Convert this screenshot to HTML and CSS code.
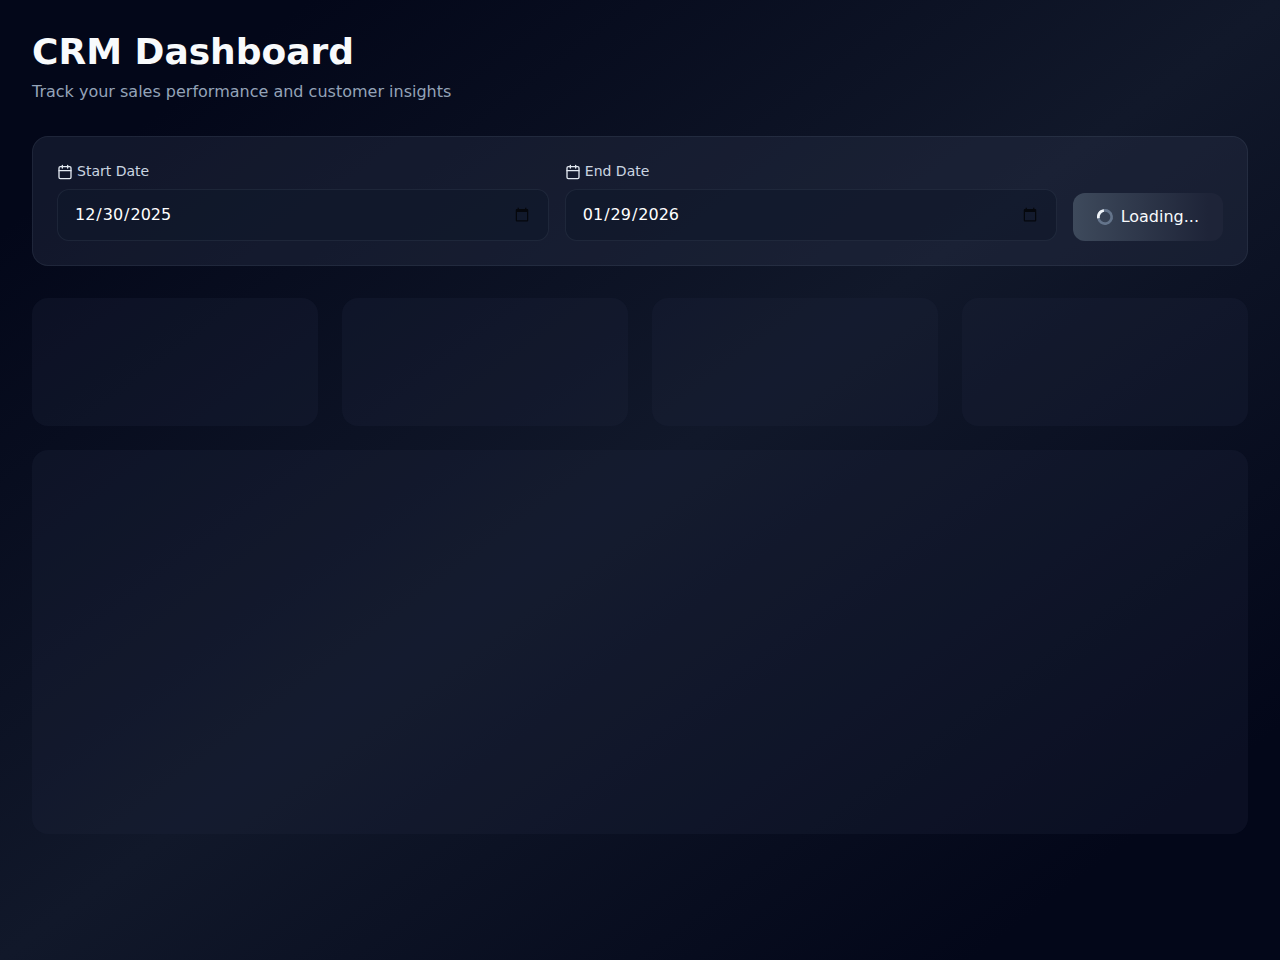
FILE: index.html
```html
<!DOCTYPE html>
<html lang="en-US">

<head>
    <meta charset="UTF-8">
    <meta name="viewport" content="width=device-width, initial-scale=1.0">
    <title>CRM Dashboard</title>
    <link rel="stylesheet" href="styles.css">
</head>

<body>
    <main class="dashboard">
        <header class="page-header">
            <h1>CRM Dashboard</h1>
            <p>Track your sales performance and customer insights</p>
        </header>

        <form class="filters">
            <div class="field">
                <label for="start-date">
                    <svg class="icon" viewBox="0 0 24 24" aria-hidden="true">
                        <path d="M8 2v4M16 2v4" />
                        <rect x="3" y="4" width="18" height="18" rx="2" />
                        <path d="M3 10h18" />
                    </svg>Start Date
                </label>
                <input type="date" id="start-date" value="2025-12-30">
            </div>
            <div class="field">
                <label for="end-date">
                    <svg class="icon" viewBox="0 0 24 24" aria-hidden="true">
                        <path d="M8 2v4M16 2v4" />
                        <rect x="3" y="4" width="18" height="18" rx="2" />
                        <path d="M3 10h18" />
                    </svg>End Date
                </label>
                <input type="date" id="end-date" value="2026-01-29">
            </div>
            <button type="submit" class="load-btn" disabled>
                <svg class="spinner" viewBox="0 0 24 24" aria-hidden="true">
                    <circle class="track" cx="12" cy="12" r="10" />
                    <path class="arc" d="M4 12a8 8 0 018-8V0C5.373 0 0 5.373 0 12h4z" />
                </svg>
                Loading...
            </button>
        </form>

        <!-- placeholders while the data loads -->
        <section class="stats" aria-busy="true">
            <div class="skeleton"></div>
            <div class="skeleton"></div>
            <div class="skeleton"></div>
            <div class="skeleton"></div>
        </section>
        <section class="skeleton chart" aria-busy="true"></section>
    </main>
</body>

</html>
```

FILE: styles.css
```css
* {
    box-sizing: border-box;
}

body {
    margin: 0;
    min-height: 100vh;
    font-family: "DejaVu Sans", sans-serif;
    font-size: 16px;
    line-height: 24px;
    color: #fff;
    background: linear-gradient(to bottom right, #030719, #030719 12%, #11182a 50%, #030719 88%, #030719);
}

.dashboard {
    padding: 32px;
}

.page-header {
    margin-bottom: 32px;
}

.page-header h1 {
    margin: 0 0 8px;
    font-size: 36px;
    line-height: 40px;
    color: #f8fafc;
}

.page-header p {
    margin: 0;
    color: #94a3b8;
}

.filters {
    display: flex;
    align-items: flex-end;
    gap: 16px;
    margin-bottom: 32px;
    padding: 24px;
    background: rgba(41, 48, 70, 0.4);
    border: 1px solid rgba(148, 163, 184, 0.1);
    border-radius: 16px;
}

.field {
    flex: 1;
}

.field label {
    display: block;
    margin-bottom: 8px;
    font-size: 14px;
    line-height: 20px;
    color: #cbd5e1;
}

.icon {
    width: 16px;
    height: 16px;
    margin-right: 4px;
    vertical-align: middle;
    fill: none;
    stroke: #e2e8f0;
    stroke-width: 2;
    stroke-linecap: round;
    stroke-linejoin: round;
}

.field input {
    display: block;
    width: 100%;
    height: 52px;
    padding: 12px 16px;
    font: inherit;
    color: #fff;
    background: rgba(15, 23, 42, 0.6);
    border: 1px solid rgba(148, 163, 184, 0.1);
    border-radius: 12px;
}

.field input::-webkit-calendar-picker-indicator {
    opacity: 0.7;
}

.load-btn {
    display: flex;
    align-items: center;
    gap: 8px;
    padding: 12px 24px;
    font: inherit;
    color: #f8fafc;
    background: linear-gradient(to right, #3e4a5c, #1e2438 90%);
    border: none;
    border-radius: 12px;
}

.spinner {
    width: 16px;
    height: 16px;
    transform: rotate(-10deg);
}

.track {
    fill: none;
    stroke: #64748b;
    stroke-width: 4;
}

.arc {
    fill: #f1f5f9;
}

.stats {
    display: grid;
    grid-template-columns: repeat(4, 1fr);
    gap: 24px;
    margin-bottom: 24px;
}

.skeleton {
    height: 128px;
    background: rgba(30, 38, 58, 0.3);
    border-radius: 16px;
}

.chart {
    height: 384px;
}
```
